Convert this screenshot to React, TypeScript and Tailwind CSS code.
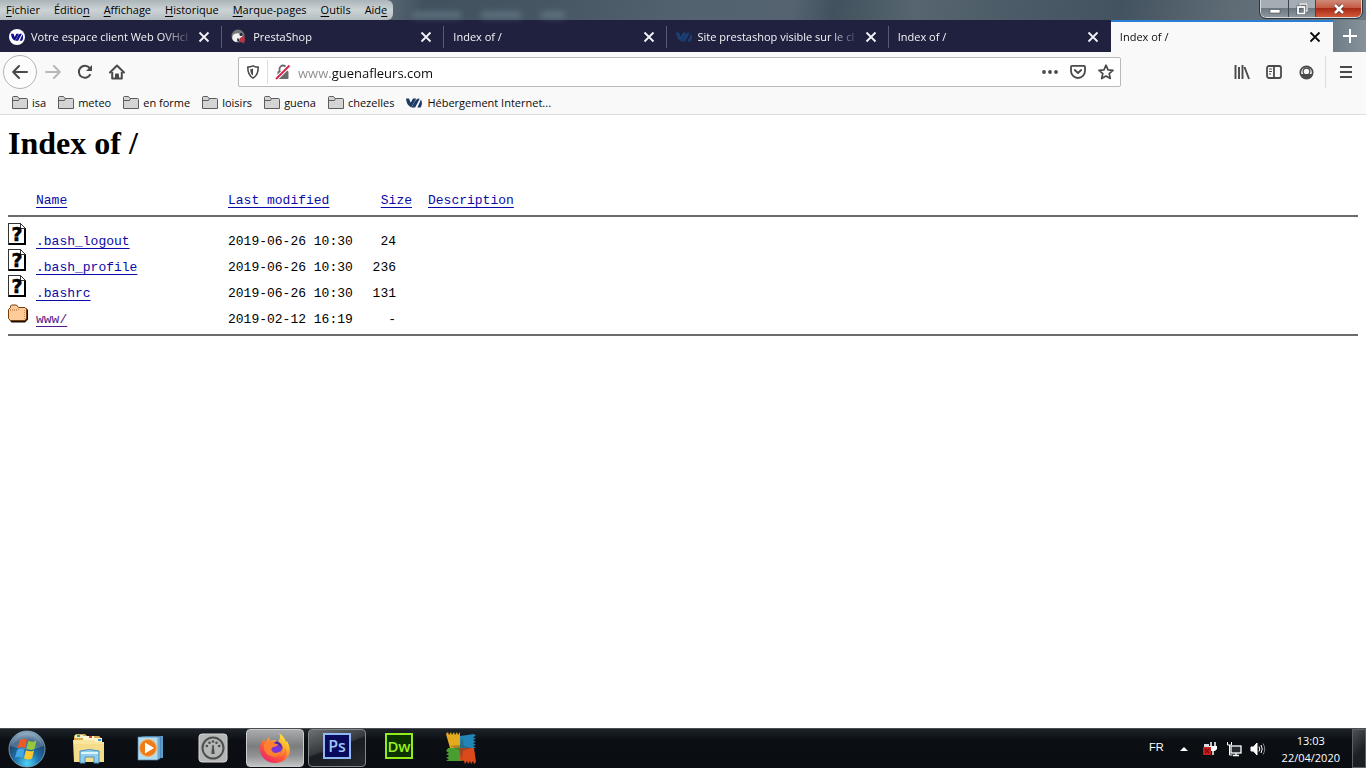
import clsx from 'clsx';
import type { ReactNode } from 'react';

interface Tab {
  title: string;
  icon?: ReactNode;
  active?: boolean;
}

interface FileEntry {
  name: string;
  modified: string;
  size: string;
  kind: 'file' | 'dir';
}

const MENUS: [string, string, string][] = [
  ['', 'F', 'ichier'],
  ['Éditio', 'n', ''],
  ['', 'A', 'ffichage'],
  ['', 'H', 'istorique'],
  ['', 'M', 'arque-pages'],
  ['', 'O', 'utils'],
  ['Aid', 'e', ''],
];

const TABS: Tab[] = [
  { title: 'Votre espace client Web OVHcl', icon: <OvhRoundIcon /> },
  { title: 'PrestaShop', icon: <PrestaIcon /> },
  { title: 'Index of /' },
  { title: 'Site prestashop visible sur le cl', icon: <OvhIcon className="text-[#1b3f72]" /> },
  { title: 'Index of /' },
  { title: 'Index of /', active: true },
];

const BOOKMARKS = ['isa', 'meteo', 'en forme', 'loisirs', 'guena', 'chezelles'];

const FILES: FileEntry[] = [
  { name: '.bash_logout', modified: '2019-06-26 10:30', size: '24', kind: 'file' },
  { name: '.bash_profile', modified: '2019-06-26 10:30', size: '236', kind: 'file' },
  { name: '.bashrc', modified: '2019-06-26 10:30', size: '131', kind: 'file' },
  { name: 'www/', modified: '2019-02-12 16:19', size: '-', kind: 'dir' },
];

export default function App() {
  return (
    <div className="flex h-screen min-w-[1000px] flex-col overflow-hidden bg-white font-['Open_Sans',sans-serif] text-[11px] leading-4 text-[#0c0c0d]">
      <TitleBar />
      <TabStrip />
      <NavBar />
      <BookmarksBar />
      <DirectoryIndex />
      <Taskbar />
    </div>
  );
}

function TitleBar() {
  return (
    <header className="flex h-5 shrink-0 items-start bg-[linear-gradient(100deg,#8d979e_0%,#5b6a76_28%,#41525e_31%,#465663_40%,#53626f_50%,#54636f_58%,#41525e_61%,#56656f_67%,#4a5a66_75%,#43535f_82%,#5f6c76_90%,#6d7780_100%)]">
      <nav className="flex h-5 items-center gap-3.5 rounded-r-md bg-[linear-gradient(180deg,#aab4b9,#ccd3d5_50%,#b3bcc0)] px-1.5 text-black">
        {MENUS.map(([before, key, after]) => (
          <button key={before + key + after} type="button" className="leading-4">
            {before}
            <span className="underline underline-offset-2">{key}</span>
            {after}
          </button>
        ))}
      </nav>
      {/* glass reflections */}
      <div className="mt-3 ml-5 flex gap-5 opacity-50 blur-[3px]">
        <span className="h-1.5 w-12 bg-[#8195a4]" />
        <span className="h-1.5 w-10 bg-[#8195a4]" />
        <span className="h-1.5 w-6 bg-[#8195a4]" />
      </div>
      <div className="mr-1 ml-auto flex h-[18px] overflow-hidden rounded-b-md border border-t-0 border-[#d5dade] outline outline-[#2d363d]">
        <button
          type="button"
          aria-label="Réduire"
          className="grid w-7 place-items-center border-r border-[#3e474f] bg-[linear-gradient(180deg,#a4adb4_50%,#6c7780_50%,#8c969e)]"
        >
          <svg viewBox="0 0 12 12" className="size-3">
            <rect x="1" y="6.500" width="10" height="3.500" fill="#fff" stroke="#444c55" strokeWidth=".6" />
          </svg>
        </button>
        <button
          type="button"
          aria-label="Restaurer"
          className="grid w-[27px] place-items-center border-r border-[#3e474f] bg-[linear-gradient(180deg,#a4adb4_50%,#6c7780_50%,#8c969e)]"
        >
          <svg viewBox="0 0 12 12" className="size-3" fill="none">
            <path d="M4 3V1h7v7H9" stroke="#444c55" strokeWidth="2.400" />
            <path d="M4 3V1h7v7H9" stroke="#fff" strokeWidth="1.300" />
            <rect x="2" y="4" width="6.500" height="6.500" stroke="#444c55" strokeWidth="2.800" />
            <rect x="2" y="4" width="6.500" height="6.500" stroke="#fff" strokeWidth="1.800" />
          </svg>
        </button>
        <button
          type="button"
          aria-label="Fermer la fenêtre"
          className="grid w-[45px] place-items-center bg-[linear-gradient(180deg,#cf8a78,#c4563f_50%,#a82a14_50%,#d2593a)]"
        >
          <svg viewBox="0 0 12 12" className="size-3" fill="none">
            <path d="M2 2l8 8M10 2l-8 8" stroke="#5b2a24" strokeWidth="4" />
            <path d="M2 2l8 8M10 2l-8 8" stroke="#fff" strokeWidth="2.600" />
          </svg>
        </button>
      </div>
    </header>
  );
}

function TabStrip() {
  return (
    <div className="flex h-8 shrink-0 bg-[#20213f]">
      <div role="tablist" className="flex min-w-0 flex-1">
        {TABS.map((tab, i) => (
          <TabItem key={i} tab={tab} separator={i < 4} />
        ))}
      </div>
      <button
        type="button"
        aria-label="Nouvel onglet"
        className="grid w-[33px] place-items-center bg-[linear-gradient(90deg,#6f7d88,#87929a)] text-white"
      >
        <svg viewBox="0 0 16 16" className="size-4" fill="none" stroke="currentColor" strokeWidth="2">
          <path d="M8 1v14M1 8h14" />
        </svg>
      </button>
    </div>
  );
}

function TabItem({ tab, separator }: { tab: Tab; separator: boolean }) {
  return (
    <div
      className={clsx(
        'relative flex min-w-0 flex-1 items-center border-t-2 pr-2 pl-[9px]',
        tab.active ? 'border-[#2a7fd4] bg-[#f9f9fa] text-[#0c0c0d]' : 'border-transparent text-[#f4f4f8]',
      )}
    >
      {tab.icon && <span className="mr-1.5 shrink-0">{tab.icon}</span>}
      <button
        type="button"
        role="tab"
        aria-selected={!!tab.active}
        className="min-w-0 flex-1 overflow-hidden text-left whitespace-nowrap [mask-image:linear-gradient(to_left,transparent,#000_32px)]"
      >
        {tab.title}
      </button>
      <button type="button" aria-label="Fermer l’onglet" className="grid size-5 shrink-0 place-items-center">
        <svg viewBox="0 0 12 12" className="size-3" fill="none" stroke="currentColor" strokeWidth="1.800">
          <path d="M1.500 1.500l9 9M10.500 1.500l-9 9" />
        </svg>
      </button>
      {separator && <span className="absolute top-1 right-0 h-5.5 w-px bg-[#5a5b73]" />}
    </div>
  );
}

function NavBar() {
  return (
    <div className="flex h-10 shrink-0 items-center bg-[#f9f9fa] pl-[3px] text-[#4a4a4c]">
      <button
        type="button"
        aria-label="Précédent"
        className="grid size-[34px] place-items-center rounded-full border border-[#b4b4b5] bg-[#fcfcfc]"
      >
        <ArrowIcon />
      </button>
      <button type="button" aria-label="Suivant" disabled className="grid size-8 place-items-center text-[#b8b8ba]">
        <ArrowIcon className="-scale-x-100" />
      </button>
      <button type="button" aria-label="Actualiser" className="grid size-8 place-items-center">
        <svg viewBox="0 0 16 16" className="size-4" fill="none" stroke="currentColor" strokeWidth="2">
          <path d="M13.400 10.200A6 6 0 1 1 12.600 4" />
          <path d="M15 1v6H9z" fill="currentColor" stroke="none" />
        </svg>
      </button>
      <button type="button" aria-label="Accueil" className="grid size-8 place-items-center">
        <svg viewBox="0 0 16 16" className="size-4" fill="none" stroke="currentColor" strokeWidth="2">
          <path d="M1 8.500L8 1.500l7 7" strokeLinecap="round" strokeLinejoin="round" />
          <path d="M3.200 8v6.500h9.600V8" strokeLinejoin="round" />
          <path d="M6 15v-4.500a1 1 0 0 1 1-1h2a1 1 0 0 1 1 1V15z" fill="currentColor" stroke="none" />
        </svg>
      </button>

      <div className="mr-[105px] ml-[105px] flex h-[30px] min-w-0 flex-1 items-center rounded-xs border border-[#b9b9ba] bg-white">
        <button type="button" aria-label="Protection contre le pistage" className="grid h-7 w-7 place-items-center">
          <svg viewBox="0 0 16 16" className="size-[14px]" fill="none" stroke="currentColor" strokeWidth="1.800">
            <path d="M8 1c2 1 4 1.400 6 1.400 0 6-1 10-6 12.600C3 12.400 2 8.400 2 2.400 4 2.400 6 2 8 1z" strokeLinejoin="round" />
            <path d="M8 4v8C5.500 10.500 5 8 4.800 4.800 6 4.700 7 4.400 8 4z" fill="currentColor" stroke="none" />
          </svg>
        </button>
        <span className="h-6 w-px bg-[#dededf]" />
        <button type="button" aria-label="Connexion non sécurisée" className="grid h-7 w-[30px] place-items-center">
          <svg viewBox="0 0 16 16" className="size-4" fill="none">
            <path d="M4.500 7V5a3.500 3.500 0 0 1 7 0v2" stroke="#6a6a6c" strokeWidth="1.800" />
            <rect x="2.500" y="7" width="11" height="8" rx="1" fill="#6a6a6c" />
            <path d="M1 15L14.500 1.500" stroke="#fff" strokeWidth="4" />
            <path d="M1 15L14.500 1.500" stroke="#d7264c" strokeWidth="2" />
          </svg>
        </button>
        <input
          type="text"
          aria-label="Adresse"
          defaultValue="www.guenafleurs.com"
          className="h-7 min-w-0 flex-1 bg-[linear-gradient(to_right,#8b8b8d_33px,#0c0c0d_33px)] bg-clip-text pt-0.5 text-[13px] text-transparent outline-none"
        />
        <button type="button" aria-label="Actions de la page" className="grid h-7 w-7 place-items-center">
          <svg viewBox="0 0 16 16" className="size-4" fill="currentColor">
            <circle cx="2" cy="8" r="1.900" />
            <circle cx="8" cy="8" r="1.900" />
            <circle cx="14" cy="8" r="1.900" />
          </svg>
        </button>
        <button type="button" aria-label="Pocket" className="grid h-7 w-7 place-items-center">
          <svg viewBox="0 0 16 16" className="size-4" fill="none" stroke="currentColor" strokeWidth="1.800">
            <path d="M2 1.900h12a1 1 0 0 1 1 1V7A7 7 0 0 1 1 7V2.900a1 1 0 0 1 1-1z" />
            <path d="M4.800 6L8 9l3.200-3" strokeLinecap="round" strokeLinejoin="round" />
          </svg>
        </button>
        <button type="button" aria-label="Marquer cette page" className="grid h-7 w-7 place-items-center">
          <svg viewBox="0 0 16 16" className="size-4" fill="none" stroke="currentColor" strokeWidth="1.700">
            <path d="M8 1.200l2 4.600 5 .5-3.800 3.300 1.100 4.900L8 12l-4.300 2.500 1.100-4.900L1 6.300l5-.5z" strokeLinejoin="round" />
          </svg>
        </button>
      </div>

      <button type="button" aria-label="Bibliothèque" className="grid size-8 place-items-center">
        <svg viewBox="0 0 16 16" className="size-4" fill="none" stroke="currentColor" strokeWidth="1.900">
          <path d="M1.500 1v14M5 3v12M8.500 1v14M10.500 3l4.500 12" />
        </svg>
      </button>
      <button type="button" aria-label="Panneau latéral" className="grid size-8 place-items-center">
        <svg viewBox="0 0 16 16" className="size-4" fill="none" stroke="currentColor" strokeWidth="1.800">
          <rect x="1" y="2" width="14" height="12" rx="2" />
          <path d="M8 2v12" />
          <path d="M3 5h3M3 7.500h3M3 10h2" strokeWidth="1" />
        </svg>
      </button>
      <button type="button" aria-label="Compte" className="grid size-8 place-items-center">
        <svg viewBox="0 0 16 16" className="size-[15px]" fill="none" stroke="currentColor" strokeWidth="1.800">
          <circle cx="8" cy="8" r="6.600" />
          <path d="M1.500 9.500h13A6.600 6.600 0 0 1 8 14.600a6.600 6.600 0 0 1-6.500-5.100z" fill="currentColor" stroke="none" />
          <circle cx="8" cy="6.800" r="3.600" fill="#f9f9fa" strokeWidth="1.400" />
        </svg>
      </button>
      <span className="ml-[3px] h-8 w-px bg-[#dcdcdd]" />
      <button type="button" aria-label="Ouvrir le menu" className="grid h-8 w-10 place-items-center">
        <svg viewBox="0 0 16 16" className="size-4" fill="none" stroke="currentColor" strokeWidth="2">
          <path d="M2 3h12M2 8h12M2 13h12" />
        </svg>
      </button>
    </div>
  );
}

function BookmarksBar() {
  return (
    <nav className="flex h-[23px] shrink-0 items-center gap-3 border-b border-[#dedede] bg-[#f9f9fa] pl-3">
      {BOOKMARKS.map((label) => (
        <button key={label} type="button" className="flex items-center gap-1">
          <svg viewBox="0 0 16 16" className="size-4" stroke="#5c5c5c">
            <path d="M.5 13.500v-11a1 1 0 0 1 1-1h4l1.500 2h7.500a1 1 0 0 1 1 1v9z" fill="#d4d4d4" />
            <path d="M.5 5.500h6l1-2" fill="none" />
          </svg>
          {label}
        </button>
      ))}
      <a href="#hebergement" className="flex items-center gap-[5px]">
        <OvhIcon className="text-[#1c3a66]" />
        Hébergement Internet...
      </a>
    </nav>
  );
}

function DirectoryIndex() {
  return (
    <main className="min-h-0 flex-1 overflow-hidden bg-white px-2 pt-[10px] text-black">
      <h1 className="font-['Liberation_Serif',serif] text-[32px] leading-9 font-bold">Index of /</h1>
      <table className="mt-8 w-full table-fixed border-collapse font-['Liberation_Mono',monospace] text-[13px] leading-4">
        <thead className="border-b-2 border-[#6b6b6b] text-left">
          <tr className="h-[23px] align-top">
            <td className="w-7" />
            <HeadCell className="w-48">Name</HeadCell>
            <HeadCell className="w-32">Last modified</HeadCell>
            <HeadCell className="w-14 text-right">Size</HeadCell>
            <HeadCell className="pl-4">Description</HeadCell>
          </tr>
        </thead>
        <tbody className="border-b-2 border-[#6b6b6b] leading-3 before:block before:h-[5px] after:block after:h-2">
          {FILES.map((f) => (
            <tr key={f.name} className="h-[26px] align-bottom">
              <td className="pb-[3px]">{f.kind === 'dir' ? <FolderIcon /> : <UnknownIcon />}</td>
              <td>
                <a
                  href={`#${f.name}`}
                  className={clsx(
                    'underline underline-offset-3 [text-decoration-skip-ink:none]',
                    f.kind === 'dir' ? 'text-[#551a8b]' : 'text-[#0a0aa8]',
                  )}
                >
                  {f.name}
                </a>
              </td>
              <td className="whitespace-nowrap">{f.modified}</td>
              <td className="pr-4 text-right">{f.size}</td>
              <td />
            </tr>
          ))}
        </tbody>
      </table>
    </main>
  );
}

function HeadCell({ className, children }: { className?: string; children: ReactNode }) {
  return (
    <th className={clsx('font-normal whitespace-nowrap', className)}>
      <a href="#sort" className="text-[#0a0aa8] underline underline-offset-3 [text-decoration-skip-ink:none]">
        {children}
      </a>
    </th>
  );
}

function Taskbar() {
  return (
    <footer className="flex h-10 shrink-0 border-t border-[#4a4e52] bg-[linear-gradient(180deg,#1d2329,#0b0f14_30%,#0a0d12)] text-white">
      <button type="button" aria-label="Démarrer" className="mr-[6px] grid w-[54px] place-items-center">
        <StartOrb />
      </button>
      <div className="flex gap-1">
        <TaskButton label="Explorateur">
          <ExplorerIcon />
        </TaskButton>
        <TaskButton label="Lecteur Windows Media">
          <MediaIcon />
        </TaskButton>
        <TaskButton label="Jauge">
          <GaugeIcon />
        </TaskButton>
        <TaskButton
          label="Firefox"
          className="border-[#c9cccd] bg-[linear-gradient(180deg,#a9abac,#7b7d7e_45%,#8e9091_70%,#c2c3c3)]"
        >
          <FirefoxIcon />
        </TaskButton>
        <TaskButton
          label="Photoshop"
          className="border-[#83878a] bg-[linear-gradient(160deg,#6c7073,#36393d_45%,#191c20_50%,#26292d)]"
        >
          <span className="mb-1 grid h-[26px] w-7 place-items-center border-2 border-[#8fb8f4] bg-[#0a0a5c] text-base leading-4 font-semibold text-[#9fc4f8]">
            Ps
          </span>
        </TaskButton>
        <TaskButton label="Dreamweaver">
          <span className="mb-1 grid h-[26px] w-7 place-items-center border-2 border-[#93ea1e] bg-[#0b3300] text-[15px] leading-4 font-semibold text-[#9af01f]">
            Dw
          </span>
        </TaskButton>
        <TaskButton label="AVG">
          <AvgIcon />
        </TaskButton>
      </div>
      <div className="ml-auto flex items-center">
        <span className="mr-3 mb-1 font-['Liberation_Sans',sans-serif]">FR</span>
        <button type="button" aria-label="Icônes cachées" className="mr-[10px] grid w-4 place-items-center">
          <svg viewBox="0 0 8 4" className="w-2" fill="#fff">
            <path d="M4 0l4 4H0z" />
          </svg>
        </button>
        <PowerIcon />
        <NetworkIcon />
        <SoundIcon />
        <time className="mr-3 ml-4 text-center leading-[17px]">
          13:03
          <br />
          22/04/2020
        </time>
        <button
          type="button"
          aria-label="Afficher le bureau"
          className="h-full w-[14px] border border-[#5d6165] bg-[linear-gradient(135deg,#4c5156,#1c2025_60%)]"
        />
      </div>
    </footer>
  );
}

function TaskButton({ label, className, children }: { label: string; className?: string; children: ReactNode }) {
  return (
    <button
      type="button"
      aria-label={label}
      className={clsx('grid h-[38px] w-[58px] place-items-center rounded-sm border', className ?? 'border-transparent')}
    >
      {children}
    </button>
  );
}

function ArrowIcon({ className }: { className?: string }) {
  return (
    <svg
      viewBox="0 0 16 16"
      className={clsx('size-4', className)}
      fill="none"
      stroke="currentColor"
      strokeWidth="2"
      strokeLinecap="round"
      strokeLinejoin="round"
    >
      <path d="M15 8H1.500M7 2L1.200 8 7 14" />
    </svg>
  );
}

function OvhIcon({ className }: { className?: string }) {
  return (
    <svg viewBox="0 0 16 16" className={clsx('size-4', className)} fill="currentColor">
      <path d="M0 3.500h3l1.700 4.300L7 3.500h3.300L5.300 12.500C2.300 11 .2 8 0 3.500z" />
      <path d="M12.600 3.500C10.500 4 9.300 5.500 8.400 7.200L5.600 12.500h3.500L13.600 4z" />
      <path d="M15 4.500c1.300 2.600 1.200 5.500-.4 8h-3.200z" />
    </svg>
  );
}

function OvhRoundIcon() {
  return (
    <svg viewBox="0 0 16 16" className="size-4">
      <circle cx="8" cy="8" r="8" fill="#fff" />
      <g fill="#10108c">
        <path d="M2 4.800h2.500l1.200 3.100 1.700-3.100h2.500L6.100 11.800C3.700 10.800 2.200 8.500 2 4.800z" />
        <path d="M11.800 4.500C10.300 4.900 9.400 6 8.800 7.200l-2.400 4.600h2.600l3.800-6.800z" />
        <path d="M13.500 5.600c.9 2 .8 4.300-.4 6.200h-2.500z" />
      </g>
    </svg>
  );
}

function PrestaIcon() {
  return (
    <svg viewBox="0 0 16 16" className="size-4">
      <circle cx="7" cy="7" r="6.500" fill="#77797d" />
      <path d="M1.500 7a5 3.500 0 0 1 8-2l2 2-2 5-5 1a5 5 0 0 1-3-6z" fill="#f3f1ef" />
      <circle cx="10" cy="5.500" r="1.500" fill="#222438" />
      <path d="M9 9l4-2.500 1 4-1 4-4-2z" fill="#b83545" />
      <path d="M6 9.500h2.500l.5 4-3-1.500z" fill="#444550" />
    </svg>
  );
}

function UnknownIcon() {
  return (
    <svg viewBox="0 0 20 22" className="block h-[22px] w-5" shapeRendering="crispEdges">
      <path d="M.5.500h12l5 5v16H.5z" fill="#fff" stroke="#333" />
      <path d="M12.500.5v5h5" fill="none" stroke="#333" />
      <path d="M17 6v15H1" fill="none" stroke="#000" strokeWidth="2" />
      <text
        x="9"
        y="18"
        textAnchor="middle"
        stroke="#000"
        strokeWidth=".5"
        className="font-['DejaVu_Sans',sans-serif] text-[19px] font-bold"
      >
        ?
      </text>
    </svg>
  );
}

function FolderIcon() {
  return (
    <svg viewBox="0 0 20 22" className="block h-[22px] w-5">
      <path d="M1 18.500l2.500 3H17l3-3V9l-2-2z" fill="#1a0d00" />
      <path d="M.5 8.500l2-2V5l1-1h5l2 2.500h6.500l1.500 1.500v9.500L17 19.500H2.500L.5 17.500z" fill="#ffcc99" stroke="#7a3d08" />
      <path d="M2 9h7.500l2-1.500" fill="none" stroke="#a5622b" strokeDasharray="1 1" />
      <path d="M16.500 9v9" fill="none" stroke="#d9935a" strokeDasharray="1 1" />
    </svg>
  );
}

function StartOrb() {
  return (
    <svg viewBox="0 0 38 38" className="size-[38px]">
      <defs>
        <radialGradient id="orb" cx="50%" cy="90%" r="85%">
          <stop offset="0" stopColor="#4fd3f5" />
          <stop offset=".4" stopColor="#1e73ac" />
          <stop offset=".75" stopColor="#1f4870" />
          <stop offset="1" stopColor="#7fa1b9" />
        </radialGradient>
      </defs>
      <circle cx="19" cy="19" r="18" fill="url(#orb)" stroke="#8daabd" strokeWidth=".8" />
      <path d="M2.500 16a17 17 0 0 1 33 0q-16 7-33 0z" fill="#fff" opacity=".2" />
      <path d="M11.500 10.500q4-3 7.500-.5l-2 8q-4-2-7.500.4z" fill="#ee5a24" />
      <path d="M20.500 10.500q4 2.500 8 0l-2 8.500q-4 2-8-.4z" fill="#94c93d" />
      <path d="M9 20q4-2.600 7.500-.4l-2 8q-4-2-7.500.4z" fill="#43a8e8" />
      <path d="M18 20.200q4 2.200 8 .2l-2 8.200q-4 2-8-.4z" fill="#fdc92f" />
    </svg>
  );
}

function ExplorerIcon() {
  return (
    <svg viewBox="0 0 34 32" className="h-8 w-[34px]">
      <path d="M2 4l2-2h9l2 2h12l3 3v23H2z" fill="#d9ad4d" />
      <path d="M3 3h8v3H3z" fill="#f6efcf" />
      <path d="M5 3h3v2H5z" fill="#32a852" />
      <path d="M11 4h11v4H11z" fill="#fff6d3" />
      <path d="M17 4h3v2h-3z" fill="#d94338" />
      <path d="M22 6h8v5h-8z" fill="#fdf4c9" />
      <path d="M26 7h3v2h-3z" fill="#3f8fd0" />
      <path d="M1 8h21l2 2h8v20H2z" fill="#f9e59b" />
      <path d="M2 12h30v18H2z" fill="#f4dc8b" />
      <path d="M8 19q9-3 19 0v12h-5v-6h-9v6H8z" fill="#8fcdec" stroke="#4d91b9" />
      <path d="M9 20h17v2H9z" fill="#dcf4fd" />
    </svg>
  );
}

function MediaIcon() {
  return (
    <svg viewBox="0 0 28 28" className="size-7">
      <path d="M8 2h18v22H8z" fill="#5a9bc9" />
      <path d="M5 2.500h18V25H5z" fill="#8fc5e5" stroke="#376f9c" strokeWidth=".7" />
      <path d="M1 3h20v23H1z" fill="#b3dcf0" stroke="#4f87ad" strokeWidth=".7" />
      <circle cx="11" cy="14" r="8.500" fill="#ef7b16" stroke="#f9b066" />
      <path d="M8 8.500l9 5.500-9 5.500z" fill="#fff" />
    </svg>
  );
}

function GaugeIcon() {
  return (
    <svg viewBox="0 0 30 30" className="size-[30px]" fill="none">
      <rect x="1" y="1" width="28" height="28" rx="3" fill="#b5b6b6" stroke="#d6d6d6" />
      <circle cx="15" cy="15" r="10.500" stroke="#4d4f50" strokeWidth="2" />
      <g fill="#4d4f50">
        <circle cx="8.800" cy="13" r="1.300" />
        <circle cx="11.500" cy="9.800" r="1.300" />
        <circle cx="15" cy="8.500" r="1.300" />
        <circle cx="18.500" cy="9.800" r="1.300" />
        <circle cx="21.200" cy="13" r="1.300" />
        <path d="M14.300 12h1.400l1 9h-3.400z" />
      </g>
    </svg>
  );
}

function FirefoxIcon() {
  return (
    <svg viewBox="0 0 32 32" className="size-8">
      <defs>
        <linearGradient id="fox" x1="85%" y1="5%" x2="15%" y2="95%">
          <stop offset="0" stopColor="#fff04b" />
          <stop offset=".3" stopColor="#ffb02a" />
          <stop offset=".65" stopColor="#ff5a3c" />
          <stop offset="1" stopColor="#e81f6e" />
        </linearGradient>
      </defs>
      <path
        d="M20 1c3 2 6 5 7 9l1-1c3 5 4 11 1 15-3 5-8 7-13 7C8 31 1 25 1 17c0-4 1-7 4-10l1 3 4-5 1 4c3-1 6-1 8 1 2-3 3-6 1-9z"
        fill="url(#fox)"
      />
      <circle cx="16.500" cy="16.500" r="6.500" fill="#7a35d5" />
      <path d="M17 9c5 1 7 5 6.500 9-1-4-4-6-7.500-5z" fill="#4f2aa5" />
      <path
        d="M5 12c3-3 7-3 10-1 1 1 3 1 4 1 0 2-3 3-5 3-2 1-2 3-1 4 2 3 6 2 9 0-1 5-6 7-10 5-5-2-8-6-7-12z"
        fill="#ff8030"
      />
      <path d="M3 19c2 6 8 9 14 8 5-1 9-5 9-11 4 6 0 14-10 14C9 30 3 25 3 19z" fill="#f4344f" opacity=".3" />
    </svg>
  );
}

function AvgIcon() {
  return (
    <svg viewBox="0 0 32 34" className="h-[34px] w-8">
      <path d="M1 3l2-2 1 3 2-3 1 3 2-3 1 3 2-3 1 3 2-3v16H5z" fill="#e5a91f" />
      <path d="M15 5l14-2 2 2-3 1 3 2-3 1 3 2-3 1 3 2-3 1 3 2H15z" fill="#2186b5" />
      <path d="M3 17h14v13H1l3-2-3-1 3-2-3-2 3-1-3-2z" fill="#4a9d31" />
      <path d="M15 17h14l2 14-2 2-1-3-2 3-1-3-2 3-1-3-2 3-1-3-4-1z" fill="#dc4a1b" />
      <path d="M5 15l10-1 2-8 2 9 8 2-9 3-1 9-3-10z" fill="#34402b" opacity=".35" />
    </svg>
  );
}

function PowerIcon() {
  return (
    <svg viewBox="0 0 16 16" className="size-4" fill="none">
      <path d="M2 3h5v3H2z" fill="#d8dadb" />
      <path d="M9 1v4M13 1v4" stroke="#fff" strokeWidth="1.500" />
      <path d="M7 5h8v3l-2 2H9L7 8z" fill="#fff" />
      <path d="M11 10v4" stroke="#fff" strokeWidth="1.500" />
      <path d="M1 6h8v8H1z" fill="#c91c1c" />
      <path d="M3 8l4 4M7 8l-4 4" stroke="#7d0d0d" strokeWidth="1.200" />
    </svg>
  );
}

function NetworkIcon() {
  return (
    <svg viewBox="0 0 16 16" className="ml-2 size-4" fill="none" stroke="#fff">
      <rect x="5" y="5" width="10" height="7" fill="#252b31" strokeWidth="1.300" />
      <path d="M10 12v2M7 14.500h6" strokeWidth="1.300" />
      <path d="M1.500 1v3h4V1M3.500 4v10h3" />
    </svg>
  );
}

function SoundIcon() {
  return (
    <svg viewBox="0 0 16 16" className="ml-2 size-4" fill="none" stroke="#fff">
      <path d="M1 6h2.500L7 2v12L3.500 10H1z" fill="#fff" />
      <path d="M9 5.500q1.500 2.500 0 5M11 4q2.500 4 0 8" />
      <path d="M13 2.500q3.500 5.500 0 11" opacity=".5" />
    </svg>
  );
}
